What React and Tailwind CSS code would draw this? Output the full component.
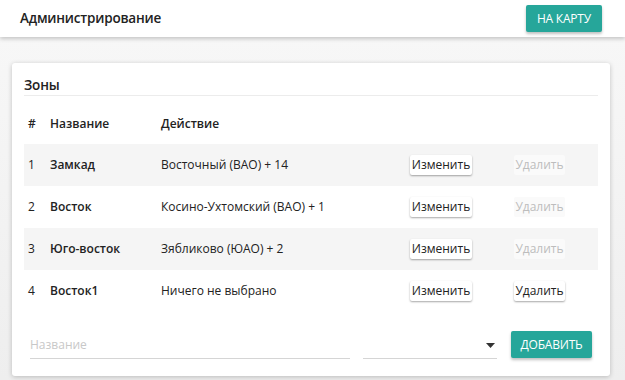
import React from "react";

const zones = [
  { id: 1, name: "Замкад", action: "Восточный (ВАО) + 14", canDelete: false },
  { id: 2, name: "Восток", action: "Косино-Ухтомский (ВАО) + 1", canDelete: false },
  { id: 3, name: "Юго-восток", action: "Зябликово (ЮАО) + 2", canDelete: false },
  { id: 4, name: "Восток1", action: "Ничего не выбрано", canDelete: true },
];

export default function App() {
  return (
    <div
      className="w-[625px] h-[380px] overflow-hidden bg-[#efefef] text-[#222]"
      style={{ fontFamily: '"Open Sans", "Noto Sans", sans-serif' }}
    >
      {/* Header */}
      <div className="relative z-10 h-[37px] bg-white flex items-center justify-between pl-[20px] pr-[23px] shadow-[0_2px_4px_rgba(0,0,0,0.2)]">
        <h1 className="text-[13.5px] font-semibold tracking-[-0.2px]">Администрирование</h1>
        <button className="h-[27px] px-[11px] bg-[#26a69a] text-white text-[12px] rounded-[2px] shadow-[0_2px_3px_rgba(0,0,0,0.25)] tracking-[-0.2px]">
          НА КАРТУ
        </button>
      </div>

      {/* Content */}
      <div className="pt-[26px] pl-[12px] pr-[15px] bg-gradient-to-b from-[#f7f7f7] to-[#eeeeee] h-[343px]">
        <div className="bg-white rounded-[3px] shadow-[0_1px_5px_rgba(0,0,0,0.22)] px-[12px] pt-[12px] pb-[17px]">
          <h2 className="text-[13.5px] leading-[20px] font-semibold border-b border-[#ececec] tracking-[-0.2px]">Зоны</h2>

          <div className="mt-[17px] flex items-center h-[22px] text-[12px] font-semibold">
            <span className="w-[26px] pl-[4px]">#</span>
            <span className="w-[111px]">Название</span>
            <span>Действие</span>
          </div>

          <div className="mt-[9px]">
            {zones.map((z, i) => (
              <div
                key={z.id}
                className={`flex items-center h-[42px] text-[12px] ${i % 2 === 0 ? "bg-[#f5f5f5]" : "bg-white"}`}
              >
                <span className="w-[26px] pl-[4px]">{z.id}</span>
                <span className="w-[111px] font-semibold">{z.name}</span>
                <span className="w-[249px]">{z.action}</span>
                <button className="h-[20px] w-[62px] bg-white text-[12px] rounded-[2px] shadow-[0_1px_2px_rgba(0,0,0,0.35)]">
                  Изменить
                </button>
                {z.canDelete ? (
                  <button className="ml-[42px] h-[20px] w-[51px] bg-white text-[12px] rounded-[2px] shadow-[0_1px_2px_rgba(0,0,0,0.35)]">
                    Удалить
                  </button>
                ) : (
                  <button className="ml-[42px] h-[20px] w-[51px] text-[12px] text-[#bdbdbd] rounded-[2px] bg-[#fafafa]">
                    Удалить
                  </button>
                )}
              </div>
            ))}
          </div>

          {/* Add form */}
          <div className="mt-[19px] flex items-end pl-[6px]">
            <div className="w-[320px] h-[27px] border-b border-[#d5d5d5] flex items-center text-[12px] text-[#c8c8c8]">
              Название
            </div>
            <div className="ml-[13px] w-[134px] h-[27px] border-b border-[#d5d5d5] flex items-center justify-end pr-[2px]">
              <svg width="9" height="5" viewBox="0 0 9 5">
                <path d="M0 0h9L4.5 5z" fill="#333" />
              </svg>
            </div>
            <button className="ml-[14px] mb-[1px] h-[27px] w-[81px] bg-[#26a69a] text-white text-[12px] rounded-[2px] shadow-[0_2px_3px_rgba(0,0,0,0.25)] tracking-[-0.2px]">
              ДОБАВИТЬ
            </button>
          </div>
        </div>
      </div>
    </div>
  );
}
